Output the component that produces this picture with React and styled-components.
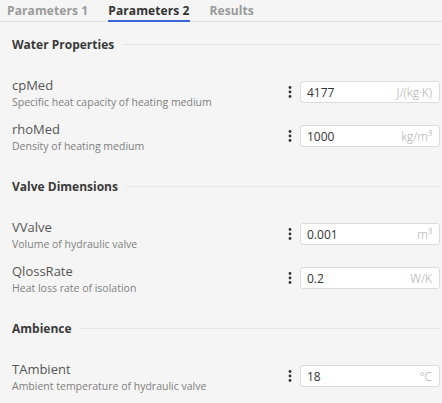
import React, { useState } from "react";
import styled, { createGlobalStyle } from "styled-components";

const GlobalStyle = createGlobalStyle`
  body {
    margin: 0;
    background: #f5f5f5;
    font-family: "Open Sans", "Noto Sans", sans-serif;
    color: #333;
  }
`;

const tabs = ["Parameters 1", "Parameters 2", "Results"];

const sections = [
  {
    title: "Water Properties",
    params: [
      { name: "cpMed", description: "Specific heat capacity of heating medium", value: "4177", unit: "J/(kg·K)" },
      { name: "rhoMed", description: "Density of heating medium", value: "1000", unit: "kg/m³" },
    ],
  },
  {
    title: "Valve Dimensions",
    params: [
      { name: "VValve", description: "Volume of hydraulic valve", value: "0.001", unit: "m³" },
      { name: "QlossRate", description: "Heat loss rate of isolation", value: "0.2", unit: "W/K" },
    ],
  },
  {
    title: "Ambience",
    params: [
      { name: "TAmbient", description: "Ambient temperature of hydraulic valve", value: "18", unit: "°C" },
    ],
  },
];

const Panel = styled.div`
  width: 442px;
  height: 403px;
  overflow: hidden;
`;

const TabBar = styled.div`
  display: flex;
  gap: 20px;
  height: 21px;
  padding: 0 7px;
  border-bottom: 1px solid #e2e2e2;
`;

const Tab = styled.button`
  appearance: none;
  background: none;
  border: none;
  border-bottom: 2px solid ${({ $active }) => ($active ? "#3567d8" : "transparent")};
  margin: 0 0 -1px;
  padding: 1px 0 0;
  height: 22px;
  box-sizing: border-box;
  font-family: inherit;
  font-size: 12px;
  font-weight: 700;
  letter-spacing: 0.1px;
  line-height: 17px;
  color: ${({ $active }) => ($active ? "#333" : "#9a9a9a")};
  cursor: pointer;
`;

const Content = styled.div`
  display: flex;
  flex-direction: column;
  gap: 20px;
  padding: 14px 2px 0 12px;
`;

const Section = styled.section`
  display: flex;
  flex-direction: column;
`;

const SectionTitle = styled.h3`
  display: flex;
  align-items: center;
  gap: 8px;
  height: 16px;
  margin: 0 0 18px;
  font-size: 12px;
  font-weight: 700;
  color: #3a3a3a;

  &::after {
    content: "";
    flex: 1;
    height: 1px;
    background: #e6e6e6;
  }
`;

const Row = styled.div`
  display: flex;
  align-items: center;
  height: 44px;
`;

const Info = styled.div`
  flex: 1;
  min-width: 0;
`;

const Name = styled.div`
  font-size: 13px;
  line-height: 19px;
  color: #555;
`;

const Description = styled.div`
  font-size: 10.5px;
  line-height: 14px;
  color: #808080;
`;

const MenuButton = styled.button`
  appearance: none;
  background: none;
  border: none;
  padding: 0;
  width: 8px;
  height: 14px;
  margin-right: 6px;
  display: flex;
  align-items: center;
  justify-content: center;
  cursor: pointer;
`;

const Field = styled.label`
  display: flex;
  align-items: center;
  width: 140px;
  height: 22px;
  box-sizing: border-box;
  padding: 0 7px 0 6px;
  background: #fff;
  border: 1px solid #dcdcdc;
  border-radius: 3px;
`;

const Input = styled.input`
  flex: 1;
  min-width: 0;
  border: none;
  outline: none;
  padding: 0;
  background: transparent;
  font-family: inherit;
  font-size: 12px;
  color: #333;
`;

const Unit = styled.span`
  font-size: 12px;
  font-weight: 300;
  color: #a8a8a8;
`;

const DotsIcon = () => (
  <svg width="4" height="12" viewBox="0 0 4 12">
    <circle cx="2" cy="1.5" r="1.4" fill="#333" />
    <circle cx="2" cy="6" r="1.4" fill="#333" />
    <circle cx="2" cy="10.5" r="1.4" fill="#333" />
  </svg>
);

const ParamRow = ({ name, description, value, unit }) => {
  const [val, setVal] = useState(value);
  return (
    <Row>
      <Info>
        <Name>{name}</Name>
        <Description>{description}</Description>
      </Info>
      <MenuButton aria-label="Options">
        <DotsIcon />
      </MenuButton>
      <Field>
        <Input value={val} onChange={(e) => setVal(e.target.value)} />
        <Unit>{unit}</Unit>
      </Field>
    </Row>
  );
};

export default function App() {
  const [active, setActive] = useState(1);
  return (
    <Panel>
      <GlobalStyle />
      <TabBar>
        {tabs.map((t, i) => (
          <Tab key={t} $active={i === active} onClick={() => setActive(i)}>
            {t}
          </Tab>
        ))}
      </TabBar>
      <Content>
        {sections.map((s) => (
          <Section key={s.title}>
            <SectionTitle>{s.title}</SectionTitle>
            {s.params.map((p) => (
              <ParamRow key={p.name} {...p} />
            ))}
          </Section>
        ))}
      </Content>
    </Panel>
  );
}
